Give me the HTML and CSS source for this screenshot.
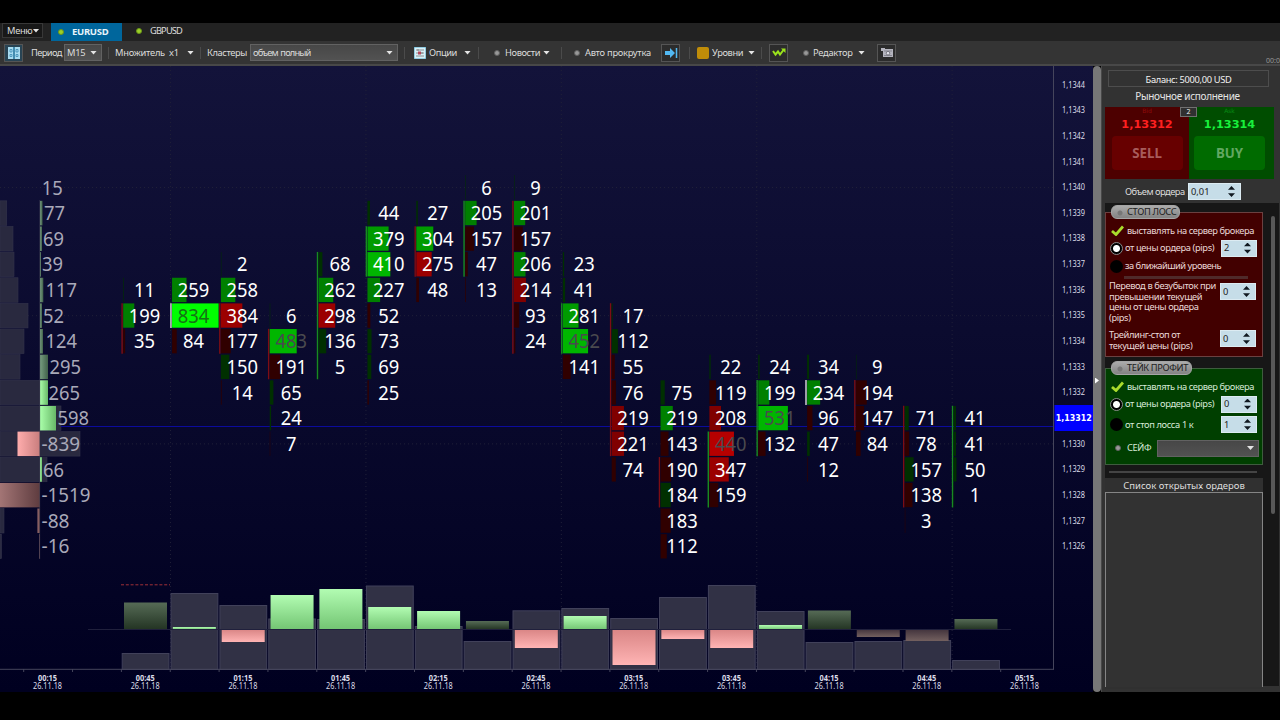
FILE: index.html
```
<!DOCTYPE html>
<html lang="ru">
<head>
<meta charset="utf-8">
<title>EURUSD</title>
<link rel="stylesheet" href="styles.css">
</head>
<body>
<div class="app">
  <header class="tabs">
    <div class="menu">Меню<i class="caret"></i></div>
    <div class="tab tab-active"><i class="led"></i><b>EURUSD</b></div>
    <div class="tab"><i class="led"></i><span>GBPUSD</span></div>
  </header>

  <nav class="toolbar">
    <div class="tool-btn tool-first">
      <svg width="14" height="14" viewBox="0 0 14 14"><rect x="1" y="1" width="12" height="12" fill="#a9dcf0"/><path d="M7 1v12" stroke="#23739b" stroke-width="1.500"/><path d="M3 3.500h2v2.500H3zM9 3.500h2v2.500H9zM3 8.500h2v2H3zM9 8.500h2v2H9z" stroke="#3c8cb2" stroke-width=".8" fill="none"/></svg>
    </div>
    <span class="t-period">Период</span>
    <div class="select">M15<i class="caret"></i></div>
    <i class="sep"></i>
    <span class="t-mult">Множитель</span>
    <span class="t-x1">x1</span>
    <i class="caret"></i>
    <i class="sep"></i>
    <span class="t-clust">Кластеры</span>
    <div class="select select-tight">объем полный<i class="caret"></i></div>
    <i class="sep"></i>
    <svg width="12" height="12" viewBox="0 0 12 12"><rect width="12" height="12" fill="#d9f0f8" stroke="#4fa9cc"/><path d="M2 3h8M2 6h8M2 9h8M4 2v2M8 5v2" stroke="#777" stroke-width=".8"/><path d="M4 4.500h3v3H4z" fill="#b5485d"/></svg>
    <span class="t-opt">Опции</span>
    <i class="caret"></i>
    <i class="sep"></i>
    <i class="dot"></i>
    <span class="t-news">Новости</span>
    <i class="caret"></i>
    <i class="sep"></i>
    <i class="dot"></i>
    <span class="t-auto">Авто прокрутка</span>
    <div class="tool-btn">
      <svg width="14" height="12" viewBox="0 0 14 12"><path d="M1 4h5V1l5 5-5 5V8H1z" fill="#52b9f2"/><path d="M12.5 1v10" stroke="#52b9f2" stroke-width="1.5"/></svg>
    </div>
    <i class="sep"></i>
    <i class="gold"></i>
    <span class="t-lvl">Уровни</span>
    <i class="caret"></i>
    <i class="sep"></i>
    <div class="tool-btn">
      <svg width="14" height="12" viewBox="0 0 14 12"><path d="M1 4l2.500 3.500L6 4.500l2 3L11.500 3" fill="none" stroke="#9be31c" stroke-width="2"/><path d="M9 1.500h4.500V6z" fill="#9be31c"/></svg>
    </div>
    <i class="dot"></i>
    <span class="t-edit">Редактор</span>
    <i class="caret"></i>
    <div class="tool-btn">
      <svg width="14" height="12" viewBox="0 0 14 12"><path d="M1 1h4v1h8v8H3V4H1z" fill="#b4b4be"/><path d="M4 4h8M4 8.500h8" stroke="#85858f"/><circle cx="8" cy="6.200" r="1.800" fill="#e2e2ea" stroke="#66666f" stroke-width=".8"/></svg>
    </div>
  </nav>

  <main class="body">
    <svg class="chart" id="chart" width="1093" height="626" viewBox="0 66 1093 626"></svg>
    <div class="splitter"><i></i></div>
    <aside class="side">
      <span class="clock">00:0</span>
      <div class="balance">Баланс: 5000,00 USD</div>
      <div class="exec">Рыночное исполнение</div>
      <div class="deal">
        <div class="deal-half sell"><small>Bid</small><strong>1,13312</strong><button>SELL</button></div>
        <div class="deal-half buy"><small>Ask</small><strong>1,13314</strong><button>BUY</button></div>
        <span class="spread">2</span>
      </div>
      <div class="volume"><span>Объем ордера</span><div class="spin">0,01<i></i></div></div>

      <div class="orders">
        <div class="orders-col">
          <section class="box loss">
            <h3>СТОП ЛОСС</h3>
            <div class="row r-check"><svg class="check" viewBox="0 0 13 11"><path d="M1 6l4 3.500L12 1.500" fill="none" stroke="#a9dc2c" stroke-width="2.800"/></svg><span class="t-srv">выставлять на сервер брокера</span></div>
            <div class="row r-price"><i class="radio on"></i><span class="t-price">от цены ордера (pips)</span><div class="spin">2<i></i></div></div>
            <div class="row r-near"><i class="radio"></i><span class="t-near">за ближайший уровень</span></div>
            <i class="rule"></i>
            <div class="multi m-even"><p>Перевод в безубыток при<br>превышении текущей<br>цены от цены ордера<br>(pips)</p><div class="spin">0<i></i></div></div>
            <div class="multi m-trail"><p>Трейлинг-стоп от<br>текущей цены (pips)</p><div class="spin">0<i></i></div></div>
          </section>
          <section class="box profit">
            <h3>ТЕЙК ПРОФИТ</h3>
            <div class="row r-check"><svg class="check" viewBox="0 0 13 11"><path d="M1 6l4 3.500L12 1.500" fill="none" stroke="#a9dc2c" stroke-width="2.800"/></svg><span class="t-srv">выставлять на сервер брокера</span></div>
            <div class="row r-price"><i class="radio on"></i><span class="t-price">от цены ордера (pips)</span><div class="spin">0<i></i></div></div>
            <div class="row r-stop"><i class="radio"></i><span class="t-stop">от стоп лосса 1 к</span><div class="spin">1<i></i></div></div>
            <div class="row r-safe"><i class="dot"></i><span>СЕЙФ</span><div class="select"><i class="caret"></i></div></div>
          </section>
          <i class="divider"></i>
          <section class="list"><h4>Список открытых ордеров</h4><div></div></section>
        </div>
        <div class="scroll"><i></i></div>
      </div>
    </aside>
  </main>
</div>
<script src="chart.js"></script>
</body>
</html>
```

FILE: styles.css
```
* { box-sizing: border-box; }
body { margin: 0; background: #000; font-family: "Noto Sans", "DejaVu Sans", sans-serif; font-size: 9.3px; line-height: 12px; letter-spacing: -.38px; color: #dcdcdc; }
.app { width: 1280px; height: 720px; padding-top: 23px; overflow: hidden; display: flex; flex-direction: column; }
i { display: block; font-style: normal; }
span, b { white-space: nowrap; }

.caret { width: 7px; height: 4px; background: #e4e4e4; clip-path: polygon(0 0, 100% 0, 50% 100%); flex: none; }
.dot { width: 6px; height: 6px; border-radius: 50%; background: #999; border: 1px solid #606060; }

.tabs { height: 18px; flex: none; background: #222; display: flex; }
.menu { width: 41px; height: 15px; margin: 0 8px 0 2px; padding-left: 4px; display: flex; align-items: center; gap: 0; background: #181818; border: 1px solid #383838; letter-spacing: -0.3px; white-space: nowrap; }
.tab { width: 80px; display: flex; align-items: center; padding: 0 0 2px 7px; gap: 8px; }
.tab-active { width: 71px; background: #00669c; color: #e8f4fa; margin-right: 7px; padding-bottom: 1px; }
.tab b { font-size: 9.5px; letter-spacing: -.3px; }
.tab span { letter-spacing: -0.85px; }
.led { width: 6px; height: 6px; border-radius: 50%; background: #9bd02a; border: 1px solid #6b9617; flex: none; }

.toolbar { height: 25px; flex: none; background: #343434; border-bottom: 2px solid #484848; padding-left: 4px; display: grid; align-items: center; letter-spacing: -.25px;
  grid-template-columns: 27px 33px 44px 7px 54px 18px 13px 7px 43px 154px 10px 15px 35px 14px 16px 11px 38px 18px 13px 11px 76px 28px 8px 15px 36px 13px 8px 34px 10px 45px 19px 20px; }
.t-period { letter-spacing: -.6px; }
.t-clust, .t-opt, .t-news, .t-lvl { letter-spacing: -.4px; }
.sep { width: 1px; height: 12px; background: #4b4b4b; }
.tool-btn { width: 19px; height: 18px; border: 1px solid #555; background: #2c2c2c; display: flex; align-items: center; justify-content: center; }
.tool-first { width: 19px; background: #284454; }
.select { height: 17px; margin-right: 6px; padding: 0 4px 0 2px; display: flex; align-items: center; justify-content: space-between; background: linear-gradient(#474747, #525252); border: 1px solid #626262; white-space: nowrap; }
.select-tight { letter-spacing: -.85px; word-spacing: 1px; }
.gold { width: 12px; height: 12px; border-radius: 2px; background: #c08d09; }

.body { height: 626px; flex: none; display: flex; }
.chart { display: block; flex: none; letter-spacing: 0; }
.splitter { width: 8px; background: #777; border-radius: 4px; display: flex; align-items: center; justify-content: center; }
.splitter i { width: 4px; height: 6px; background: #fff; clip-path: polygon(0 0, 100% 50%, 0 100%); margin-top: 3px; }

.side { width: 179px; position: relative; background: #323232; padding: 4px 0 6px 3px; border-left: 1px solid #484848; display: flex; flex-direction: column; }
.clock { position: absolute; right: 0; top: -11px; font-size: 7px; letter-spacing: 0; color: #999; }
.balance { width: 161px; height: 17px; margin-left: 3px; border: 1px solid #4d4d4d; text-align: center; line-height: 17px; letter-spacing: -.33px; color: #f0f0f0; }
.exec { width: 161px; margin: 3px 0 5px 2px; text-align: center; font-size: 10px; line-height: 13px; height: 12px; letter-spacing: -.3px; color: #e4e4e4; white-space: nowrap; }
.deal { width: 169px; height: 72px; display: flex; position: relative; letter-spacing: 0; }
.deal-half { width: 84px; display: flex; flex-direction: column; align-items: center; font-family: "DejaVu Sans", sans-serif; font-weight: bold; }
.deal-half.buy { width: 85px; padding-right: 4px; }
.sell { background: #4d0000; color: #ff2020; }
.buy { background: #004d00; color: #18f03c; }
.deal small { font-size: 6px; line-height: 8px; opacity: .35; font-weight: normal; }
.deal strong { font-size: 11.3px; line-height: 19px; }
.deal button { width: 71px; height: 34px; margin-top: 2px; padding: 0; border: 0; border-radius: 4px; background: #670000; color: #a75c5c; font: bold 13.3px "Noto Sans", sans-serif; }
.deal .buy button { background: #006b00; color: #62a862; }
.spread { position: absolute; left: 75px; top: 0; width: 17px; height: 10px; background: #303030; border: 1px solid #707070; text-align: center; font-size: 7px; line-height: 8px; color: #eee; }
.volume { height: 25px; margin-bottom: -1px; padding-left: 20px; display: flex; align-items: center; }
.volume span { width: 63px; letter-spacing: -.5px; }
.spin { height: 17px; width: 36px; flex: none; display: flex; align-items: center; justify-content: space-between; padding: 0 5px 0 2px; background: #c6dde8; border: 1px solid #dcebf2; color: #222; letter-spacing: 0; }
.volume .spin { width: 53px; }
.spin i { width: 7px; height: 11px; background: #101820; clip-path: polygon(50% 0, 100% 35%, 0 35%, 0 65%, 100% 65%, 50% 100%, 0 65%, 0 35%); }

.orders { height: 483px; width: 174px; background: #171717; display: flex; }
.orders-col { width: 158px; padding: 9px 0 0 0; }
.scroll { padding: 13px 0 0 8px; }
.scroll i { width: 4px; height: 298px; border-radius: 2px; background: #585858; }
.box { width: 158px; border: 1px solid #6b4040; background: #420000; color: #ead8d8; }
.loss { height: 145px; }
.profit { height: 97px; margin-top: 11px; background: #003f00; border-color: #3e5c3e; color: #d8ead8; }
.box h3 { width: max-content; height: 14px; margin: -8px 0 0 5px; padding: 0 3px 0 15px; border-radius: 6px; background: radial-gradient(circle at 8px 7px, #777 0 2px, transparent 3px), linear-gradient(#ababab, #838383); border: 1px solid #a5a5a5; font-size: 9.3px; font-weight: normal; line-height: 12px; color: #202020; white-space: nowrap; letter-spacing: -.35px; }
.row { display: flex; align-items: center; height: 17px; }
.check { width: 13px; height: 11px; margin-left: 5px; flex: none; }
.t-srv { margin-left: 3px; letter-spacing: -.42px; }
.r-check { margin-top: 3px; }
.r-price { height: 18px; }
.radio { width: 13px; height: 13px; margin-left: 4px; border-radius: 50%; background: #000; flex: none; }
.radio.on { background: radial-gradient(circle, #fff 0 3px, #000 4px); border: 1px solid #8a8a8a; }
.radio + span { margin-left: 2px; width: 96px; }
.r-near { height: 18px; }
.t-near { letter-spacing: -.5px; }
.rule { width: 124px; height: 3px; margin: 1px 0 0 18px; background: #4f2a2a; }
.multi { display: flex; justify-content: space-between; padding-right: 6px; }
.multi p { margin: 0 0 0 3px; line-height: 10.5px; white-space: nowrap; width: 112px; }
.m-even { margin-top: 2px; }
.m-even .spin { margin-top: 2px; }
.m-trail { margin-top: 7px; }
.profit .r-check { margin-top: 3px; }
.profit .r-price { height: 18px; }
.r-stop { height: 23px; }
.r-safe { height: 24px; }
.r-safe .dot { margin-left: 9px; flex: none; }
.r-safe span { width: 30px; flex: none; margin-left: 6px; }
.r-safe .select { width: 102px; flex: none; margin: 0; justify-content: flex-end; }
.divider { width: 148px; height: 2px; margin: 6px 0 0 4px; background: #444; }
.list { width: 158px; height: 211px; margin-top: 5px; background: #303030; }
.list h4 { margin: 0; height: 14px; font-size: 9.5px; line-height: 16px; font-weight: normal; text-align: center; letter-spacing: 0; color: #ddd; white-space: nowrap; }
.list div { height: 195px; border: 1px solid #858585; border-bottom: 0; background: #323232; }
.num { font-size: 19.6px; fill: #fff; }
.axis { font-size: 8.2px; fill: #dcdce8; text-anchor: middle; }
.axis-bold { font-weight: bold; }
.price { font: bold 8.5px "DejaVu Sans", sans-serif; fill: #fff; text-anchor: middle; }
```

FILE: chart.js
```
const svg = document.getElementById('chart');
const NS = 'http://www.w3.org/2000/svg';
const STEP = 48.85, ROW = 25.64;
const rowY = r => 187.5 + r * ROW;

function el(name, attrs, text) {
  const e = document.createElementNS(NS, name);
  for (const k in attrs) e.setAttribute(k, attrs[k]);
  if (text !== undefined) e.textContent = text;
  svg.appendChild(e);
  return e;
}
const rect = (x, y, w, h, fill, extra) => el('rect', Object.assign({ x, y, width: w, height: h, fill }, extra));
const line = (x1, y1, x2, y2, stroke, extra) => el('line', Object.assign({ x1, y1, x2, y2, stroke }, extra));

const defs = el('defs', {});
defs.innerHTML = [
  ['bg', '#13133a', '#000020', 1], ['up', '#b2fcb2', '#73c573', 1], ['dn', '#d98585', '#ffb4b4', 1],
  ['upDim', '#566b56', '#233423', 1], ['dnDim', '#43343d', '#73605f', 1],
  ['pUp', '#aaffaa', '#68b868', 0], ['pDn', '#ffadad', '#c87d7d', 0],
  ['pUpDim', '#779e80', '#41614a', 0], ['pDnDim', '#a37575', '#5e3c3f', 0]
].map(g => `<linearGradient id="${g[0]}" x1="0" y1="0" x2="${g[3] ? 0 : 1}" y2="${g[3]}"><stop stop-color="${g[1]}"/><stop offset="1" stop-color="${g[2]}"/></linearGradient>`).join('');

rect(0, 66, 1093, 626, 'url(#bg)');

const dots = { 'stroke-dasharray': '1 3' };
[1, 5, 9, 13, 17].forEach(k => line(121.7 + k * STEP, 66, 121.7 + k * STEP, 669, '#202038', dots));
[0, 5, 10].forEach(r => line(0, rowY(r), 1053, rowY(r), '#202038', dots));

// volume profile: total width, delta, gradient, label, label x
const profile = [
  [0, 0, '', '15', 42.7], [6.7, 2.5, 'pUpDim', '77', 45], [13, 2, 'pUpDim', '69', 44], [14, 1, 'pUpDim', '39', 43],
  [18, 3.3, 'pUpDim', '117', 46.5], [28, 2, 'pUpDim', '52', 44], [24, 3, 'pUpDim', '124', 46.5], [20, 8, 'pUpDim', '295', 50.5],
  [47, 8, 'pUp', '265', 49.5], [61, 16, 'pUp', '598', 58.5], [80, -22.5, 'pDn', '-839', 42.5], [47, 2, 'pUp', '66', 44],
  [0, -40, 'pDnDim', '-1519', 42.5], [4, -2.5, 'pDnDim', '-88', 42.5], [1.5, -0.7, 'pDnDim', '-16', 42.5]
];
profile.forEach(([w, d, g], r) => {
  const y = rowY(r) - 12.3;
  if (w) rect(0, y, w, 24.5, '#29293f', { stroke: '#34344b', 'stroke-width': 0.6 });
  if (d) rect(d > 0 ? 40 : 40 + d, y, Math.abs(d), 24.5, `url(#${g})`);
});
line(39.7, 200, 39.7, 559, '#3c3c50', { 'stroke-width': 0.6 });
line(61, 426.5, 1054, 426.5, '#0b0b9c', { 'stroke-width': 1.2 });

const label = (t, x, y, fill, anchor) => {
  const width = [...t].reduce((s, c) => s + (c === '-' ? 7 : 10.5), 0);
  el('text', { x, y: y + 7, class: 'num', style: `fill:${fill}`, 'text-anchor': anchor, textLength: width, lengthAdjust: 'spacingAndGlyphs' }, t);
};
profile.forEach((p, r) => label(p[3], p[4] - 1, rowY(r), '#a9a9b9', 'start'));

// cluster columns: first row, signed volumes (sign is the delta side), line colour, line rows
const columns = [
  [4, [11, 199, -35], 'r', 5, 6], [4, [259, 834, -84], 'w', 5, 5],
  [3, [2, 258, -384, -177, 150, -14], 'r', 5, 6], [5, [6, 483, -191, 65, 24, -7], 'r', 6, 7],
  [3, [68, 262, -298, 136, 5], 'g', 3, 7], [1, [44, 379, 410, 227, -52, 73, 69, -25], 'g', 2, 3],
  [1, [27, 304, -275, -48], 'r', 2, 3], [0, [6, 205, -157, -47, -13], 'g', 1, 3],
  [0, [9, 201, -157, 206, -214, -93, -24], 'r', 1, 6], [3, [23, 41, 281, 452, -141], 'g', 5, 6],
  [5, [17, 112, -55, -76, -219, -221, -74], 'r', 5, 10], [8, [75, 219, -143, -190, 184, -183, -112], 'r', 11, 12],
  [7, [22, -119, -208, -440, -347, -159], 'g', 10, 12], [7, [24, 199, 531, -132], 'g', 8, 10],
  [7, [34, 234, -96, 47, -12], 'w', 8, 8], [7, [9, -194, -147, -84], 'r', 8, 9],
  [9, [71, -78, 157, -138, -3], 'r', 9, 12], [9, [41, 41, 50, 1], 'g', 9, 12]
];
const level = v => v > 600 ? 255 : v > 400 ? 182 : v > 270 ? 155 : v > 195 ? 128 : 48;
const lineColor = { r: '#7d0d14', g: '#188a22', w: '#dedede' };
columns.forEach(([first, vals, side, a, b], k) => {
  const x = 123.2 + k * STEP;
  line(x - 1.1, rowY(a) - 12.5, x - 1.1, rowY(b) + 12.3, lineColor[side], { 'stroke-width': 1.4 });
  vals.forEach((s, i) => {
    const v = Math.abs(s), c = level(v), y = rowY(first + i);
    rect(x, y - 12.3, Math.max(0.5, v * 0.0558), 24.3, s > 0 ? `rgb(0,${c},0)` : `rgb(${c},0,0)`);
    const fill = v > 600 ? '#167016' : v > 430 ? '#4a4a4e' : '#fff';
    label(String(v), 144.6 + k * STEP, y, fill, 'middle');
  });
});

// volume and delta histogram
const volTop = [653, 593, 605, 618.5, 619, 585.5, 626, 641, 610.3, 608, 618, 597, 585, 611, 642, 641, 640, 660];
const delta = [602.5, 627, 642, 595, 589, 607, 611, 621, 648, 616, 665, 639, 648, 625, 610.5, 637, 641, 619];
const dim = [0, 7, 14, 15, 16, 17];
volTop.forEach((t, k) => {
  rect(122.2 + k * STEP, t + 0.5, 46.8, 669 - t, '#313145', { stroke: '#41415a' });
});
delta.forEach((d, k) => {
  const up = d < 629.5, g = (up ? 'up' : 'dn') + (dim.includes(k) ? 'Dim' : '');
  rect(124 + k * STEP, up ? d : 629.5, 43, Math.abs(629.5 - d), `url(#${g})`);
});
line(88, 629.5, 1011, 629.5, '#20203c');
line(121, 584.8, 170, 584.8, '#a03038', { 'stroke-dasharray': '3 1.8' });
line(0, 669.3, 1054, 669.3, '#45455c');
line(1053.5, 66, 1053.5, 669.5, '#45455c');
for (let k = 0; k < 21; k++) line(23.7 + k * STEP, 669, 23.7 + k * STEP, 672, '#45455c');

['00:15', '00:45', '01:15', '01:45', '02:15', '02:45', '03:15', '03:45', '04:15', '04:45', '05:15'].forEach((t, i) => {
  const x = 47.5 + i * STEP * 2;
  el('text', { x, y: 680.5, class: 'axis axis-bold', textLength: 19, lengthAdjust: 'spacingAndGlyphs' }, t);
  el('text', { x, y: 689.3, class: 'axis', textLength: 29, lengthAdjust: 'spacingAndGlyphs' }, '26.11.18');
});

for (let r = -4; r <= 14; r++) {
  if (r === 9) continue;
  el('text', { x: 1073.5, y: rowY(r) + 2.7, class: 'axis', textLength: 23, lengthAdjust: 'spacingAndGlyphs' }, '1,13' + (40 - r));
}
rect(1054.5, 405, 39, 26, '#0000ff');
el('text', { x: 1073.8, y: 421, class: 'price', textLength: 36, lengthAdjust: 'spacingAndGlyphs' }, '1,13312');
```
